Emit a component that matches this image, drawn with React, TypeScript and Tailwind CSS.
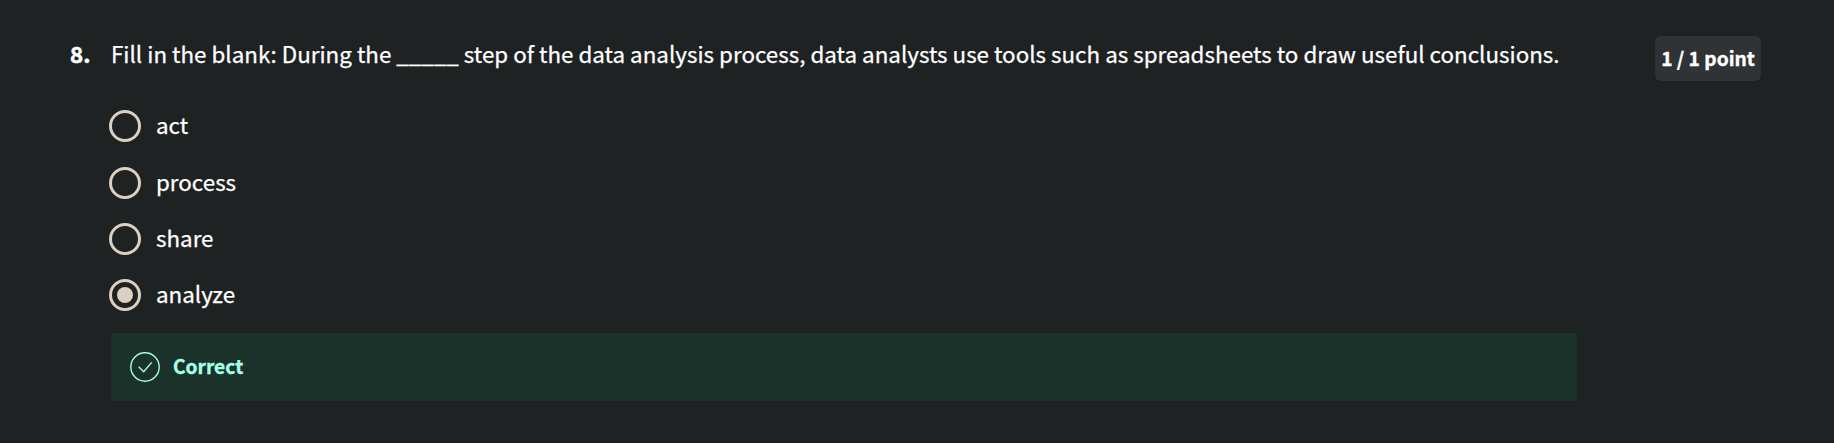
const options = ["act", "process", "share", "analyze"];

export default function App() {
  return (
    <main className="flex h-[443px] items-start border-b border-[#1c1b20] bg-[#1f2223] pl-[70px] pt-[35px] font-['Noto_Sans_CJK_SC','Noto_Sans',sans-serif] text-[22.38px] leading-[36px] text-white [-webkit-text-stroke:0.25px_currentColor]">
      <span className="w-[41px] shrink-0 font-bold [-webkit-text-stroke:0.5px_currentColor]">8.</span>
      <section className="w-[1466px] shrink-0">
        <p className="whitespace-nowrap">
          Fill in the blank: During the _____ step of the data analysis process, data analysts use tools such as spreadsheets to draw useful conclusions.
        </p>
        <ul className="-ml-[2px] mt-[27px]">
          {options.map((o) => (
            <li key={o} className="flex h-[56px] items-center gap-[15px] first:mb-px">
              <span className="flex size-[32px] items-center justify-center rounded-full border-[3px] border-[#dbd0c1]">
                {o === "analyze" && <span className="size-[16px] rounded-full bg-[#dbd0c1]" />}
              </span>
              <span className="pb-[4px]">{o}</span>
            </li>
          ))}
        </ul>
        <div className="mt-[10px] flex h-[68px] items-center gap-[13.5px] bg-[#1b322a] pl-[18.5px] text-[19.2px] font-bold text-[#a5ffe6] [-webkit-text-stroke:0.35px_currentColor]">
          <svg viewBox="0 0 30 30" className="size-[30px]" fill="none" stroke="currentColor" strokeWidth="1.4">
            <circle cx="15" cy="15" r="14.2" />
            <path d="M8.7 14.7l5 5 8-9.3" />
          </svg>
          <span className="pb-[2px]">Correct</span>
        </div>
      </section>
      <span className="ml-[78px] mt-px flex h-[45px] w-[106px] items-center justify-center rounded-[6px] bg-[#303336] pb-[2px] text-[19.2px] font-bold [-webkit-text-stroke:0.35px_currentColor]">1 / 1 point</span>
    </main>
  );
}
